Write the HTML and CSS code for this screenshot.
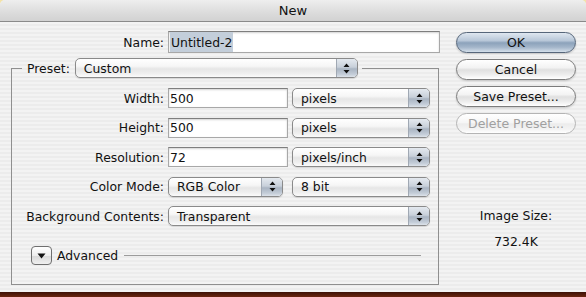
FILE: index.html
```html
<!DOCTYPE html>
<html>
<head>
<meta charset="utf-8">
<title>New</title>
<link rel="stylesheet" href="styles.css">
</head>
<body>
<div class="window">
  <div class="titlebar">New</div>
  <div class="content">
    <div class="main">
      <div class="name-row">
        <span class="label">Name:</span>
        <div class="field name-field"><span class="sel">Untitled-2</span></div>
      </div>
      <fieldset class="group">
        <legend class="legend">
          <span class="label-plain">Preset:</span>
          <div class="popup preset">Custom<span class="arrows"><svg width="7" height="11" viewBox="0 0 7 11"><path d="M3.5 0.5 L6.5 4 L0.5 4 Z M0.5 7 L6.5 7 L3.5 10.5 Z" fill="#111"/></svg></span></div>
        </legend>
        <div class="grid">
          <span class="label">Width:</span>
          <div class="field">500</div>
          <div class="popup">pixels<span class="arrows"><svg width="7" height="11" viewBox="0 0 7 11"><path d="M3.5 0.5 L6.5 4 L0.5 4 Z M0.5 7 L6.5 7 L3.5 10.5 Z" fill="#111"/></svg></span></div>

          <span class="label">Height:</span>
          <div class="field">500</div>
          <div class="popup">pixels<span class="arrows"><svg width="7" height="11" viewBox="0 0 7 11"><path d="M3.5 0.5 L6.5 4 L0.5 4 Z M0.5 7 L6.5 7 L3.5 10.5 Z" fill="#111"/></svg></span></div>

          <span class="label">Resolution:</span>
          <div class="field">72</div>
          <div class="popup">pixels/inch<span class="arrows"><svg width="7" height="11" viewBox="0 0 7 11"><path d="M3.5 0.5 L6.5 4 L0.5 4 Z M0.5 7 L6.5 7 L3.5 10.5 Z" fill="#111"/></svg></span></div>

          <span class="label">Color Mode:</span>
          <div class="popup mode">RGB Color<span class="arrows"><svg width="7" height="11" viewBox="0 0 7 11"><path d="M3.5 0.5 L6.5 4 L0.5 4 Z M0.5 7 L6.5 7 L3.5 10.5 Z" fill="#111"/></svg></span></div>
          <div class="popup">8 bit<span class="arrows"><svg width="7" height="11" viewBox="0 0 7 11"><path d="M3.5 0.5 L6.5 4 L0.5 4 Z M0.5 7 L6.5 7 L3.5 10.5 Z" fill="#111"/></svg></span></div>

          <span class="label">Background Contents:</span>
          <div class="popup wide">Transparent<span class="arrows"><svg width="7" height="11" viewBox="0 0 7 11"><path d="M3.5 0.5 L6.5 4 L0.5 4 Z M0.5 7 L6.5 7 L3.5 10.5 Z" fill="#111"/></svg></span></div>
        </div>
        <div class="advanced">
          <span class="disclosure"><svg width="9" height="6" viewBox="0 0 9 6"><path d="M0.5 0.5 L8.5 0.5 L4.5 5.5 Z" fill="#111"/></svg></span>
          <span class="adv-text">Advanced</span>
          <span class="rule"></span>
        </div>
      </fieldset>
    </div>
    <div class="side">
      <div class="btn default">OK</div>
      <div class="btn">Cancel</div>
      <div class="btn">Save Preset...</div>
      <div class="btn disabled">Delete Preset...</div>
      <div class="size">
        <div>Image Size:</div>
        <div>732.4K</div>
      </div>
    </div>
  </div>
</div>
<div class="desktop"></div>
</body>
</html>
```

FILE: styles.css
```css
html, body {
  margin: 0;
  padding: 0;
}

body {
  width: 586px;
  height: 297px;
  overflow: hidden;
  background: #f3e3a8;
  font-family: "DejaVu Sans", "Liberation Sans", sans-serif;
  font-size: 12.4px;
  color: #111;
}

.window {
  height: 292px;
  display: flex;
  flex-direction: column;
  border-radius: 5px 5px 0 0;
  overflow: hidden;
  background: repeating-linear-gradient(#ececec 0 2px, #f3f3f3 2px 4px);
}

.titlebar {
  height: 21px;
  flex: none;
  border-bottom: 1px solid #8a8a8a;
  background: linear-gradient(#eeeeee, #dcdcdc 60%, #d2d2d2);
  display: flex;
  align-items: center;
  justify-content: center;
  font-size: 13px;
  color: #111;
}

.content {
  display: flex;
  padding: 9px 0 0 11px;
  gap: 16px;
}

.main {
  width: 429px;
  display: flex;
  flex-direction: column;
}

.name-row {
  display: flex;
  align-items: center;
  gap: 4px;
  height: 22px;
}

.name-row .label {
  width: 153px;
}

.label {
  text-align: right;
  white-space: nowrap;
}

.field {
  height: 21px;
  box-sizing: border-box;
  background: #fff;
  border: 1px solid #a8a8a8;
  border-top-color: #7e7e7e;
  box-shadow: inset 0 1px 2px rgba(0, 0, 0, 0.18);
  display: flex;
  align-items: center;
  padding-left: 1px;
}

.name-field {
  width: 272px;
  height: 22px;
  align-items: stretch;
}

.sel {
  background: #c3ceda;
  display: flex;
  align-items: center;
  padding: 0 1px;
}

.group {
  margin: 5px 0 0 0;
  width: 428px;
  box-sizing: border-box;
  border: 1px solid #8f8f8f;
  border-radius: 0;
  padding: 10px 0 19px 0;
  min-width: 0;
}

.legend {
  margin-left: 10px;
  padding: 0 4px 0 5px;
  display: flex;
  align-items: center;
  gap: 5px;
}

.popup {
  height: 20px;
  box-sizing: border-box;
  border: 1px solid #8a8a8a;
  border-radius: 5px;
  background: linear-gradient(#ffffff 0%, #f6f6f6 40%, #e6e6e6 55%, #efefef 80%, #fbfbfb 100%);
  box-shadow: 0 1px 1px rgba(0, 0, 0, 0.12);
  display: flex;
  align-items: center;
  padding-left: 8px;
  white-space: nowrap;
  overflow: hidden;
}

.preset {
  width: 283px;
}

.arrows {
  margin-left: auto;
  width: 20px;
  align-self: stretch;
  flex: none;
  border-left: 1px solid #a0a8b3;
  background: linear-gradient(#e4e9ef 0%, #c8d0da 45%, #a9b4c2 55%, #c4cdd8 85%, #dde3ea 100%);
  display: flex;
  align-items: center;
  justify-content: center;
}

.grid {
  display: grid;
  grid-template-columns: 152px 120px 138px;
  grid-auto-rows: 20px;
  column-gap: 4px;
  row-gap: 9.5px;
  align-items: center;
}

.grid .field {
  height: 20px;
}

.mode {
  width: 115px;
}

.wide {
  grid-column: 2 / 4;
}

.advanced {
  display: flex;
  align-items: center;
  margin: 20px 17px 0 19px;
  height: 19px;
}

.disclosure {
  width: 21px;
  height: 19px;
  box-sizing: border-box;
  border: 1px solid #6f6f6f;
  border-radius: 4px;
  background: linear-gradient(#ffffff, #eeeeee 50%, #dadada 55%, #f0f0f0);
  display: flex;
  align-items: center;
  justify-content: center;
  flex: none;
}

.adv-text {
  margin-left: 5px;
}

.rule {
  flex: 1;
  height: 1px;
  background: #9c9c9c;
  margin-left: 6px;
}

.side {
  width: 120px;
  padding-top: 1px;
  display: flex;
  flex-direction: column;
  gap: 6px;
}

.btn {
  height: 21px;
  box-sizing: border-box;
  border: 1px solid #7c7c7c;
  border-radius: 11px;
  background: linear-gradient(#ffffff 0%, #f3f3f3 40%, #e0e0e0 52%, #ececec 75%, #ffffff 100%);
  box-shadow: 0 1px 2px rgba(0, 0, 0, 0.18);
  display: flex;
  align-items: center;
  justify-content: center;
  font-size: 12.5px;
  white-space: nowrap;
}

.btn.default {
  border-color: #56667a;
  background: linear-gradient(#dfe7f0 0%, #b8c7d8 40%, #8ca2bb 52%, #a4b6ca 75%, #d4dfea 100%);
}

.btn.disabled {
  color: #a0a0a0;
  border-color: #b4b4b4;
  box-shadow: none;
  background: linear-gradient(#ffffff 0%, #f6f6f6 45%, #ececec 52%, #f3f3f3 80%, #ffffff 100%);
}

.size {
  margin-top: 63px;
  text-align: center;
  line-height: 26px;
}

.desktop {
  height: 5px;
  background: linear-gradient(#3d1207, #6b2610);
}
```
